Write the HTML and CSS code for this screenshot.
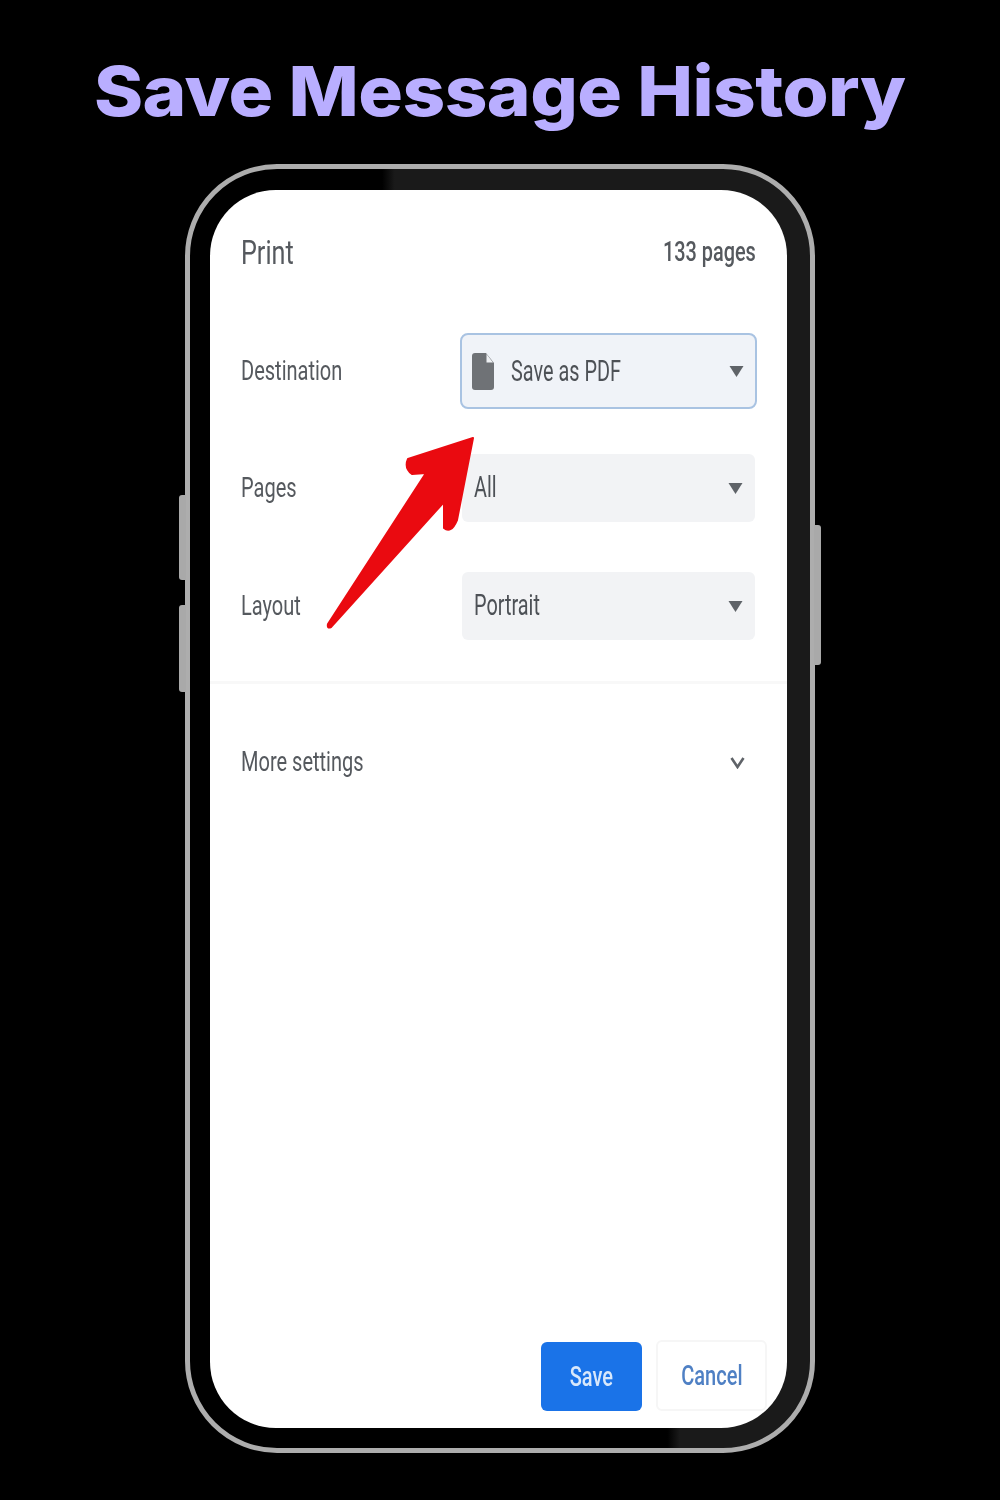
FILE: index.html
```html
<!DOCTYPE html>
<html lang="en">
<head>
<meta charset="utf-8">
<title>Save Message History</title>
<link rel="stylesheet" href="styles.css">
</head>
<body>
<h1 class="title">Save Message History</h1>
<div class="phone">
  <span class="side side-a"></span>
  <span class="side side-b"></span>
  <span class="side side-c"></span>
  <div class="screen">
    <header class="head">
      <span class="txt heading">Print</span>
      <span class="txt count">133 pages</span>
    </header>
    <div class="form">
      <div class="row row-dest">
        <span class="txt label">Destination</span>
        <div class="select focus">
          <svg class="doc" viewBox="0 0 22 37"><path d="M3 0H14L22 10V34Q22 37 19 37H3Q0 37 0 34V3Q0 0 3 0Z" fill="#6f7276"/><path d="M14.500 1V9.500H21Z" fill="#eef0f3"/></svg>
          <span class="txt value">Save as PDF</span>
          <svg class="caret" viewBox="0 0 14 11"><path d="M0 0H14L7 11Z" fill="#5f6368"/></svg>
        </div>
      </div>
      <div class="row row-plain">
        <span class="txt label">Pages</span>
        <div class="select">
          <span class="txt value">All</span>
          <svg class="caret" viewBox="0 0 14 11"><path d="M0 0H14L7 11Z" fill="#5f6368"/></svg>
        </div>
      </div>
      <div class="row row-plain">
        <span class="txt label">Layout</span>
        <div class="select">
          <span class="txt value">Portrait</span>
          <svg class="caret" viewBox="0 0 14 11"><path d="M0 0H14L7 11Z" fill="#5f6368"/></svg>
        </div>
      </div>
    </div>
    <div class="more">
      <span class="txt label">More settings</span>
      <svg class="chev" viewBox="0 0 15 13"><path d="M1.500 2L7.500 11L13.500 2" fill="none" stroke="#5f6368" stroke-width="2.600"/></svg>
    </div>
    <div class="actions">
      <button class="btn save"><span class="txt">Save</span></button>
      <button class="btn cancel"><span class="txt">Cancel</span></button>
    </div>
  </div>
  <svg class="arrow" viewBox="0 0 160 200"><path d="M147 2L131 84Q125 98 118 92L118 66L5 191Q1 193 2 188L100 37L86 38Q78 32 82 23Z" fill="#ea0a10" stroke="#ea0a10" stroke-width="2" stroke-linejoin="round"/></svg>
</div>
</body>
</html>
```
FILE: styles.css
```css
* { box-sizing: border-box; }
html, body { margin: 0; height: 1500px; background: #000; overflow: hidden; }
body { display: flex; flex-direction: column; align-items: center; font-family: Roboto, "Liberation Sans", sans-serif; }
.title { margin: 50px 0 0; height: 114px; line-height: 82px; font-family: Inter, "Open Sans", sans-serif; font-weight: 800; font-size: 69px; letter-spacing: -0.5px; color: #b9aeff; white-space: nowrap; transform: scaleX(1.08); }
.phone { position: relative; width: 630px; height: 1289px; padding: 21px 23px 20px 20px; border: 5px solid #adadad; border-radius: 92px; background: linear-gradient(90deg, #000 31%, #1a1a1a 33%) top / 100% 51% no-repeat, linear-gradient(90deg, #000 77%, #1a1a1a 79%) bottom / 100% 50% no-repeat; }
.side { position: absolute; width: 7px; background: #a9a9a9; }
.side-a { left: -11px; top: 326px; height: 85px; border-radius: 3px 0 0 3px; }
.side-b { left: -11px; top: 436px; height: 87px; border-radius: 3px 0 0 3px; }
.side-c { right: -11px; top: 356px; height: 140px; border-radius: 0 3px 3px 0; }
.screen { display: flex; flex-direction: column; height: 100%; background: #fff; border-radius: 66px; }
.txt { display: inline-block; color: #55595e; filter: blur(.7px); white-space: nowrap; transform: scaleX(.715); transform-origin: left center; }
.head { display: flex; justify-content: space-between; align-items: center; height: 123px; padding: 0 31px; }
.heading { font-size: 34px; transform: scaleX(.74); }
.count { font-size: 28px; font-weight: 500; transform: scaleX(.71); transform-origin: right center; }
.form { display: flex; flex-direction: column; padding: 20px 31px 0; }
.row { display: flex; justify-content: space-between; align-items: center; height: 68px; margin-bottom: 50px; }
.row-plain { margin-right: 1px; }
.row-plain .value { padding-bottom: 2px; }
.row-dest { margin-bottom: 45px; height: 76px; margin-right: -1px; }
.label { font-size: 28px; padding-bottom: 2px; }
.select { display: flex; align-items: center; width: 293px; height: 100%; padding: 0 12px; background: #f2f3f5; border-radius: 6px; }
.select .value { font-size: 29px; color: #4d5156; transform: scaleX(.685); }
.focus { width: 297px; padding: 0 11px 0 10px; border: 2px solid #a9c3e2; border-radius: 8px; background: #f0f3f8; }
.doc { width: 22px; height: 37px; margin-right: 17px; flex: none; filter: blur(.4px); }
.caret { width: 15px; height: 11px; margin-left: auto; flex: none; filter: blur(.4px); }
.more { display: flex; justify-content: space-between; align-items: center; height: 160px; margin-top: -9px; padding: 0 42px 0 31px; border-top: 3px solid #f8f8f8; }
.chev { width: 15px; height: 13px; filter: blur(.4px); }
.actions { display: flex; justify-content: flex-end; align-items: flex-end; gap: 14px; margin-top: auto; padding: 0 20px 17px 0; }
.btn { display: flex; align-items: center; justify-content: center; font-family: inherit; font-size: 28px; font-weight: 500; border-radius: 6px; padding: 0; }
.btn .txt { transform-origin: center; }
.save { width: 101px; height: 69px; background: #1a73e8; border: 0; }
.save .txt { color: #d8e8fb; }
.cancel { width: 111px; height: 71px; background: #fff; border: 2px solid #f6f6f6; }
.cancel .txt { color: #4f80c4; }
.arrow { position: absolute; left: 136px; top: 267px; width: 160px; height: 200px; filter: blur(.4px); }
```
